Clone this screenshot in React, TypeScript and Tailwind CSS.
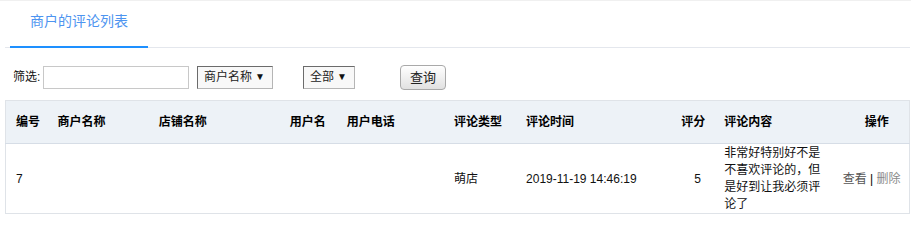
import React from "react";

const font = { fontFamily: '"Liberation Sans", Arial, "Noto Sans CJK SC", sans-serif' };

function Select({ label, width }: { label: string; width: string }) {
  return (
    <div
      className={`${width} h-[23px] flex items-center justify-between pl-[6px] pr-[7px] bg-[#f8f8f8] border border-l-[#6b6b6b] border-t-[#6b6b6b] border-r-[#b5b5b5] border-b-[#b5b5b5] text-[12px] text-[#222] leading-none`}
    >
      <span>{label}</span>
      <span className="text-[10px] text-[#111]">▼</span>
    </div>
  );
}

export default function App() {
  const heads = [
    { t: "编号", c: "w-[42px]" },
    { t: "商户名称", c: "w-[101px]" },
    { t: "店铺名称", c: "w-[131px]" },
    { t: "用户名", c: "w-[57px]" },
    { t: "用户电话", c: "w-[107px]" },
    { t: "评论类型", c: "w-[72px]" },
    { t: "评论时间", c: "w-[155px]" },
    { t: "评分", c: "w-[43px]" },
    { t: "评论内容", c: "w-[120px]" },
    { t: "操作", c: "w-[75px]" },
  ];
  return (
    <div className="w-[911px] h-[215px] bg-white overflow-hidden border-t border-[#f0f0f0]" style={font}>
      <div className="mx-[5px] w-[905px] border-b border-[#e4e7ed] h-[47px] flex">
        <div className="ml-[5px] w-[138px] h-[47px] border-b-2 border-[#1e90ff] text-center text-[14px] leading-[20px] pt-[10px] text-[#4d94f0]">
          商户的评论列表
        </div>
      </div>

      <div className="flex items-center h-[24px] mt-[17px] text-[12px] text-[#111]">
        <span className="ml-[13px] w-[30px] leading-none">筛选:</span>
        <div className="w-[146px] h-[23px] border border-[#c8c8c8] bg-white"></div>
        <div className="ml-[8px]">
          <Select label="商户名称" width="w-[76px]" />
        </div>
        <div className="ml-[30px]">
          <Select label="全部" width="w-[52px]" />
        </div>
        <button className="ml-[45px] w-[46px] h-[25px] rounded-[4px] border border-[#a9a9a9] bg-gradient-to-b from-[#ffffff] to-[#e1e1e1] text-[13px] text-[#222] leading-none">
          查询
        </button>
      </div>

      <table className="mt-[11px] ml-[5px] w-[905px] table-fixed border-collapse border border-[#dfe3e8] text-[12px]">
        <colgroup>
          {heads.map((h, i) => (
            <col key={i} className={h.c} />
          ))}
        </colgroup>
        <thead>
          <tr className="h-[43px] bg-[#edf2f7] border-b border-[#d6dde6]">
            {heads.map((h, i) => (
              <th
                key={i}
                className={`font-bold text-[#000] p-0 pl-[10px] align-middle leading-[17px] ${
                  i === 9 ? "text-center pl-0" : "text-left"
                }`}
              >
                {h.t}
              </th>
            ))}
          </tr>
        </thead>
        <tbody>
          <tr className="h-[70px] text-[#111]">
            <td className="pl-[10px] align-middle">7</td>
            <td className="pl-[10px]"></td>
            <td className="pl-[10px]"></td>
            <td className="pl-[10px]"></td>
            <td className="pl-[10px]"></td>
            <td className="pl-[10px] align-middle">萌店</td>
            <td className="pl-[10px] align-middle">2019-11-19 14:46:19</td>
            <td className="pl-[23px] align-middle">5</td>
            <td className="pl-[10px] pr-[10px] align-middle leading-[17px] p-0">
              非常好特别好不是不喜欢评论的，但是好到让我必须评论了
            </td>
            <td className="text-center align-middle">
              <span className="text-[#555]">查看</span>
              <span className="text-[#000]"> | </span>
              <span className="text-[#8a8a8a]">删除</span>
            </td>
          </tr>
        </tbody>
      </table>
    </div>
  );
}
